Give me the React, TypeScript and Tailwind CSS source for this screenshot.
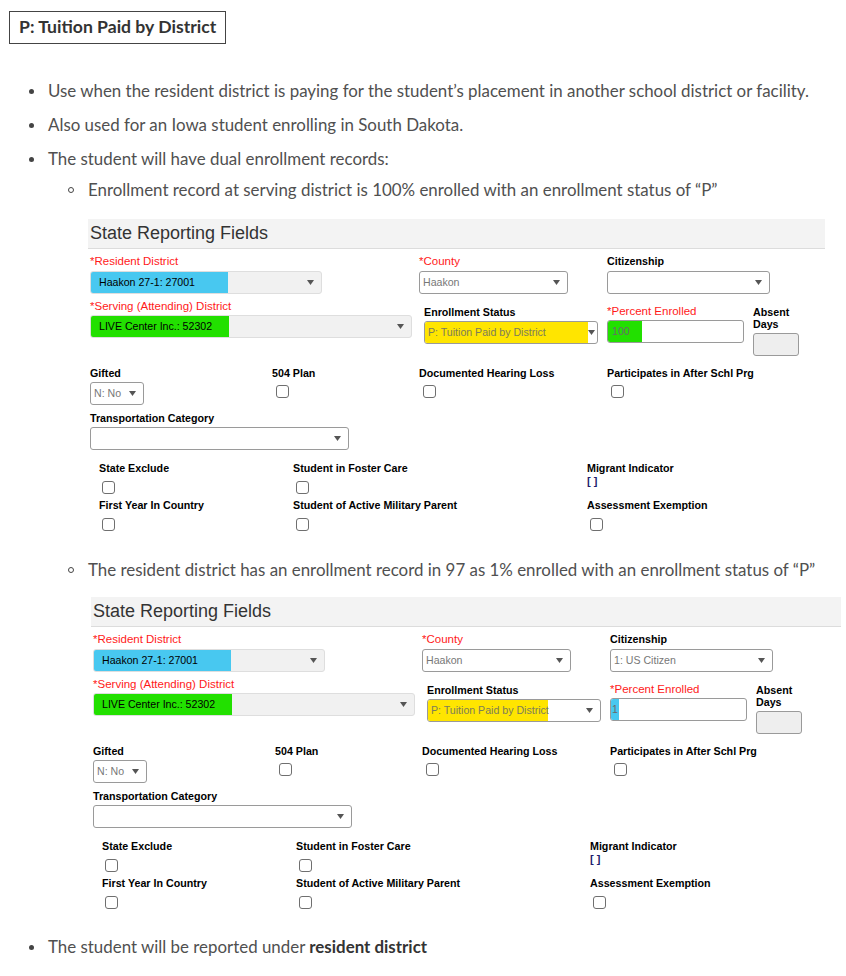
import React from 'react';

type SelectProps = {
  className: string;
  value?: string;
  textClass?: string;
  hl?: string;
  disabled?: boolean;
};

const Arrow = () => (
  <svg width="7" height="5" viewBox="0 0 7 5" className="mr-[7px] shrink-0">
    <path d="M0 0h7L3.5 5z" fill="#555" />
  </svg>
);

const Select = ({ className, value = '', textClass = 'text-[#777]', hl, disabled }: SelectProps) => (
  <div
    className={`flex h-[23px] items-center overflow-hidden rounded-[3px] border ${
      disabled ? 'border-[#dedede] bg-[#f1f1f1]' : 'border-[#9a9a9a] bg-white'
    } ${className}`}
  >
    <div className="flex h-full flex-1 items-center">
      {hl ? (
        <span className={`flex h-full items-center whitespace-nowrap ${hl} ${textClass}`}>{value}</span>
      ) : (
        <span className={`pl-[3px] whitespace-nowrap ${textClass}`}>{value}</span>
      )}
    </div>
    <Arrow />
  </div>
);

const Label = ({ children, req }: { children: React.ReactNode; req?: boolean }) =>
  req ? (
    <div className="text-[11.5px] leading-[13px] text-[#ff1a1a]">*{children}</div>
  ) : (
    <div className="text-[10.7px] font-bold leading-[12px] text-black">{children}</div>
  );

const Check = () => <div className="h-[13px] w-[13px] rounded-[3px] border border-[#6f6f6f] bg-white" />;

type PanelProps = {
  headerWidth: string;
  citizenship?: string;
  percent: string;
  percentHl: string;
  statusHl: string;
};

const Panel = ({ headerWidth, citizenship, percent, percentHl, statusHl }: PanelProps) => (
  <div className="font-['Liberation_Sans',Arial,sans-serif] text-[10.6px] text-black">
    <div className={`flex h-[30px] items-center border-b border-[#dcdcdc] bg-[#f3f3f3] pl-[2px] text-[18px] text-[#333] ${headerWidth}`}>
      State Reporting Fields
    </div>

    <div className="pl-[2px]">
      {/* row 1 */}
      <div className="mt-[6px] flex">
        <div className="w-[329px]">
          <Label req>Resident District</Label>
          <Select
            className="mt-[3px] w-[232px]"
            disabled
            value="Haakon 27-1: 27001"
            textClass="text-black"
            hl="w-[137px] bg-[#48c8f0] pl-[8px]"
          />
        </div>
        <div className="w-[188px]">
          <Label req>County</Label>
          <Select className="mt-[3px] w-[149px]" value="Haakon" />
        </div>
        <div>
          <div className="h-[13px]">
            <Label>Citizenship</Label>
          </div>
          <Select className="mt-[3px] w-[163px]" value={citizenship} />
        </div>
      </div>

      {/* row 2 */}
      <div className="mt-[6px] flex">
        <div className="w-[334px]">
          <Label req>Serving (Attending) District</Label>
          <Select
            className="mt-[2px] w-[322px]"
            disabled
            value="LIVE Center Inc.: 52302"
            textClass="text-black"
            hl="w-[138px] bg-[#22e000] pl-[8px]"
          />
        </div>
        <div className="w-[183px] pt-[6px]">
          <Label>Enrollment Status</Label>
          <Select
            className="mt-[3px] w-[174px]"
            value="P: Tuition Paid by District"
            textClass="text-[#7c7c5c]"
            hl={statusHl}
          />
        </div>
        <div className="w-[146px] pt-[5px]">
          <Label req>Percent Enrolled</Label>
          <div className="mt-[2px] flex h-[23px] w-[137px] items-center overflow-hidden rounded-[3px] border border-[#9a9a9a] bg-white">
            <span className={`flex h-full items-center text-[#6a6a6a] ${percentHl}`}>{percent}</span>
          </div>
        </div>
        <div className="pt-[6px]">
          <Label>Absent</Label>
          <Label>Days</Label>
          <div className="mt-[3px] h-[23px] w-[46px] rounded-[3px] border border-[#9a9a9a] bg-[#eeeeee]" />
        </div>
      </div>

      {/* row 3 */}
      <div className="mt-[11px] flex">
        <div className="w-[182px]">
          <Label>Gifted</Label>
          <Select className="mt-[3px] w-[54px]" value="N: No" />
        </div>
        <div className="w-[147px] pl-[4px]">
          <div className="-ml-[4px]">
            <Label>504 Plan</Label>
          </div>
          <div className="mt-[6px]">
            <Check />
          </div>
        </div>
        <div className="w-[188px] pl-[4px]">
          <div className="-ml-[4px]">
            <Label>Documented Hearing Loss</Label>
          </div>
          <div className="mt-[6px]">
            <Check />
          </div>
        </div>
        <div className="pl-[4px]">
          <div className="-ml-[4px]">
            <Label>Participates in After Schl Prg</Label>
          </div>
          <div className="mt-[6px]">
            <Check />
          </div>
        </div>
      </div>

      <div className="mt-[7px]">
        <Label>Transportation Category</Label>
        <Select className="mt-[3px] w-[259px]" />
      </div>

      {/* checkbox grid */}
      <div className="ml-[9px] mt-[12px] grid grid-cols-[194px_294px_auto] gap-y-[5px]">
        {[
          ['State Exclude', 'check'],
          ['Student in Foster Care', 'check'],
          ['Migrant Indicator', 'bracket'],
          ['First Year In Country', 'check'],
          ['Student of Active Military Parent', 'check'],
          ['Assessment Exemption', 'check'],
        ].map(([label, kind]) => (
          <div key={label}>
            <Label>{label}</Label>
            {kind === 'check' ? (
              <div className="ml-[3px] mt-[7px]">
                <Check />
              </div>
            ) : (
              <div className="mt-[1px] text-[11px] font-bold leading-[12px] text-[#1c1c6c]">[ ]</div>
            )}
          </div>
        ))}
      </div>
    </div>
  </div>
);

const Bullet = ({ children, className = '' }: { children: React.ReactNode; className?: string }) => (
  <div className={`flex h-[34px] items-center ${className}`}>
    <span className="ml-[29px] mr-[14px] h-[5px] w-[5px] shrink-0 rounded-full bg-[#444]" />
    <span>{children}</span>
  </div>
);

const SubBullet = ({ children, className = '' }: { children: React.ReactNode; className?: string }) => (
  <div className={`flex h-[28px] items-center ${className}`}>
    <span className="ml-[68px] mr-[14px] h-[6px] w-[6px] shrink-0 rounded-full border border-[#444]" />
    <span>{children}</span>
  </div>
);

const App: React.FC = () => {
  return (
    <div className="min-h-screen bg-white pt-[11px] font-['Lato','Open_Sans',sans-serif] text-[16.9px] text-[#505050]">
      <div className="ml-[9px] flex h-[33px] w-fit items-center border border-[#444] px-[9px] text-[17.6px] font-bold text-[#333]">
        P: Tuition Paid by District
      </div>

      <div className="mt-[30px]">
        <Bullet>Use when the resident district is paying for the student’s placement in another school district or facility.</Bullet>
        <Bullet>Also used for an Iowa student enrolling in South Dakota.</Bullet>
        <Bullet>The student will have dual enrollment records:</Bullet>
        <SubBullet>Enrollment record at serving district is 100% enrolled with an enrollment status of “P”</SubBullet>

        <div className="ml-[88px] mt-[15px]">
          <Panel
            headerWidth="w-[737px]"
            percent="100"
            percentHl="w-[34px] bg-[#22e000] pl-[4px]"
            statusHl="w-[163px] bg-[#ffe500] pl-[3px]"
          />
        </div>

        <SubBullet className="mt-[25px]">
          The resident district has an enrollment record in 97 as 1% enrolled with an enrollment status of “P”
        </SubBullet>

        <div className="ml-[91px] mt-[13px]">
          <Panel
            headerWidth="w-[750px]"
            citizenship="1: US Citizen"
            percent="1"
            percentHl="w-[8px] bg-[#48c8f0] pl-[1px]"
            statusHl="w-[120px] bg-[#ffe500] pl-[3px]"
          />
        </div>

        <Bullet className="mt-[21px]">
          The student will be reported under <b className="text-[#333]">resident district</b>
        </Bullet>
      </div>
    </div>
  );
};

export default App;
